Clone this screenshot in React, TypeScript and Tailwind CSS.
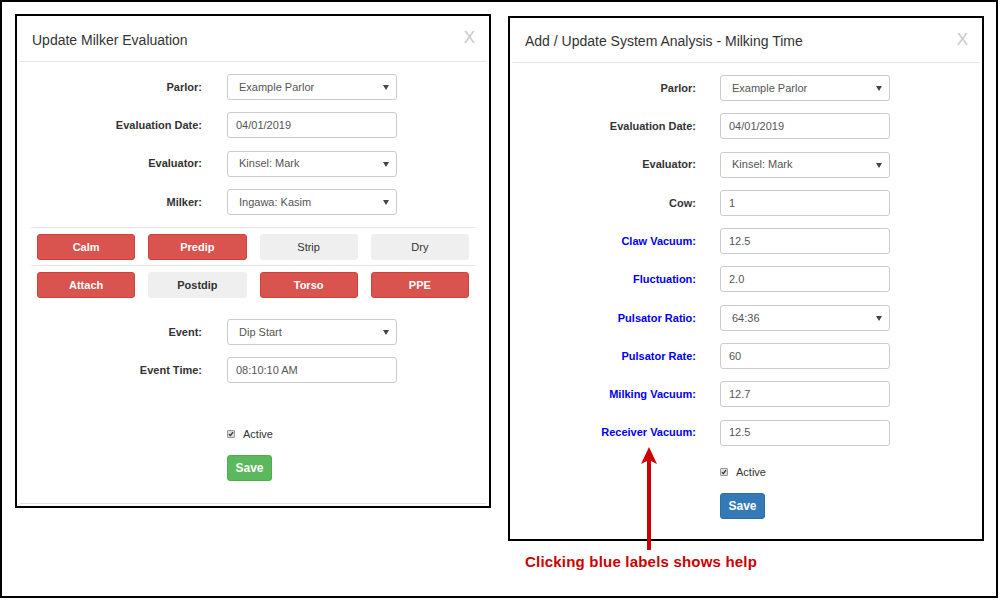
const font = "font-['Liberation_Sans',Arial,sans-serif]";

type Row = { label: string; value: string; select?: boolean; help?: boolean };

const milkerRows: Row[] = [
  { label: "Parlor:", value: "Example Parlor", select: true },
  { label: "Evaluation Date:", value: "04/01/2019" },
  { label: "Evaluator:", value: "Kinsel: Mark", select: true },
  { label: "Milker:", value: "Ingawa: Kasim", select: true },
];

const eventRows: Row[] = [
  { label: "Event:", value: "Dip Start", select: true },
  { label: "Event Time:", value: "08:10:10 AM" },
];

const systemRows: Row[] = [
  { label: "Parlor:", value: "Example Parlor", select: true },
  { label: "Evaluation Date:", value: "04/01/2019" },
  { label: "Evaluator:", value: "Kinsel: Mark", select: true },
  { label: "Cow:", value: "1" },
  { label: "Claw Vacuum:", value: "12.5", help: true },
  { label: "Fluctuation:", value: "2.0", help: true },
  { label: "Pulsator Ratio:", value: "64:36", select: true, help: true },
  { label: "Pulsator Rate:", value: "60", help: true },
  { label: "Milking Vacuum:", value: "12.7", help: true },
  { label: "Receiver Vacuum:", value: "12.5", help: true },
];

type Step = { name: string; on: boolean; bold?: boolean };

const stepRows: Step[][] = [
  [
    { name: "Calm", on: true },
    { name: "Predip", on: true },
    { name: "Strip", on: false },
    { name: "Dry", on: false },
  ],
  [
    { name: "Attach", on: true },
    { name: "Postdip", on: false, bold: true },
    { name: "Torso", on: true },
    { name: "PPE", on: true },
  ],
];

function Field({ row, labelW, gap }: { row: Row; labelW: string; gap: string }) {
  return (
    <div className="flex items-center">
      <label
        className={`${labelW} ${gap} shrink-0 text-right text-[11px] font-bold ${
          row.help ? "text-[#0000ee] cursor-pointer" : "text-[#333]"
        }`}
      >
        {row.label}
      </label>
      <div
        className={`relative flex h-[26px] w-[170px] items-center rounded-[3px] border border-[#ccc] bg-white text-[11px] text-[#555] ${
          row.select ? "pl-[11px]" : "pl-[8px]"
        }`}
      >
        {row.value}
        {row.select && (
          <svg
            className="absolute right-[7px] top-[10px]"
            width="6"
            height="5"
            viewBox="0 0 6 5"
          >
            <path d="M0 0H6L3 5Z" fill="#444" />
          </svg>
        )}
      </div>
    </div>
  );
}

function Checkbox() {
  return (
    <div className="flex items-center text-[11px] text-[#333]">
      <span className="flex h-[8px] w-[8px] items-center justify-center rounded-[1px] border border-[#999] bg-[#ddd]">
        <svg width="6" height="6" viewBox="0 0 6 6">
          <path d="M1 3.2L2.4 4.6L5 1.2" stroke="#333" strokeWidth="1.3" fill="none" />
        </svg>
      </span>
      <span className="ml-[8px]">Active</span>
    </div>
  );
}

function Header({ title, h }: { title: string; h: string }) {
  return (
    <div className={`relative mx-[3px] flex ${h} items-center border-b border-[#e5e5e5] pl-[12px] pt-[3px]`}>
      <h4 className="text-[14px] text-[#333]">{title}</h4>
      <span className="absolute right-[11px] top-[9px] text-[17px] text-[#c8c8c8]">X</span>
    </div>
  );
}

function MilkerModal() {
  return (
    <div className="flex h-[494px] w-[476px] shrink-0 flex-col border-2 border-black bg-white">
      <Header title="Update Milker Evaluation" h="h-[46px]" />
      <div className="flex flex-col gap-[12.3px] pt-[12px]">
        {milkerRows.map((r) => (
          <Field key={r.label} row={r} labelW="w-[185px]" gap="mr-[25px]" />
        ))}
      </div>
      <div className="mx-[14px] mt-[12px] border-t border-[#e5e5e5]" />
      {stepRows.map((row, i) => (
        <div key={i}>
          {i > 0 && <div className="mx-[14px] mt-[5px] border-t border-[#e5e5e5]" />}
          <div className="mx-[20px] mt-[6px] grid grid-cols-4 gap-x-[13px]">
            {row.map((s) => (
              <button
                key={s.name}
                className={`h-[26px] rounded-[3px] text-[11px] ${
                  s.on
                    ? "border border-[#d43f3a] bg-[#d9534f] font-bold text-white"
                    : `bg-[#efefef] text-[#333] ${s.bold ? "font-bold" : ""}`
                }`}
              >
                {s.name}
              </button>
            ))}
          </div>
        </div>
      ))}
      <div className="mt-[21px] flex flex-col gap-[12px]">
        {eventRows.map((r) => (
          <Field key={r.label} row={r} labelW="w-[185px]" gap="mr-[25px]" />
        ))}
      </div>
      <div className="ml-[210px] mt-[43px]">
        <Checkbox />
        <button className="mt-[13px] h-[26px] w-[45px] rounded-[3px] border border-[#4cae4c] bg-[#5cb85c] text-[12px] font-bold text-white">
          Save
        </button>
      </div>
      <div className="mx-[3px] mb-[2px] mt-auto border-t border-[#e0e0e0]" />
    </div>
  );
}

function SystemModal() {
  return (
    <div className="flex h-[525px] w-[476px] flex-col border-2 border-black bg-white">
      <Header title="Add / Update System Analysis - Milking Time" h="h-[45px]" />
      <div className="flex flex-col gap-[12.3px] pt-[12px]">
        {systemRows.map((r) => (
          <Field key={r.label} row={r} labelW="w-[186px]" gap="mr-[24px]" />
        ))}
      </div>
      <div className="ml-[210px] mt-[18px]">
        <Checkbox />
        <button className="mt-[13px] h-[26px] w-[45px] rounded-[3px] border border-[#2e6da4] bg-[#337ab7] text-[12px] font-bold text-white">
          Save
        </button>
      </div>
    </div>
  );
}

export default function App() {
  return (
    <div className={`h-[600px] w-[1000px] bg-white ${font}`}>
      <div className="relative flex h-[598px] w-[998px] items-start gap-[17px] border-2 border-black pl-[13px] pt-[12px]">
        <MilkerModal />
        <div className="mt-[2px] flex flex-col">
          <SystemModal />
          <p className="ml-[17px] mt-[12px] text-[15px] font-bold leading-[18px] tracking-[0.2px] text-[#cc0000]">
            Clicking blue labels shows help
          </p>
        </div>
        <svg
          className="absolute left-[638px] top-[443px]"
          width="18"
          height="107"
          viewBox="0 0 18 107"
        >
          <path d="M9 2L17 19L11 16V105H7V16L1 19Z" fill="#cc0000" />
        </svg>
      </div>
    </div>
  );
}
